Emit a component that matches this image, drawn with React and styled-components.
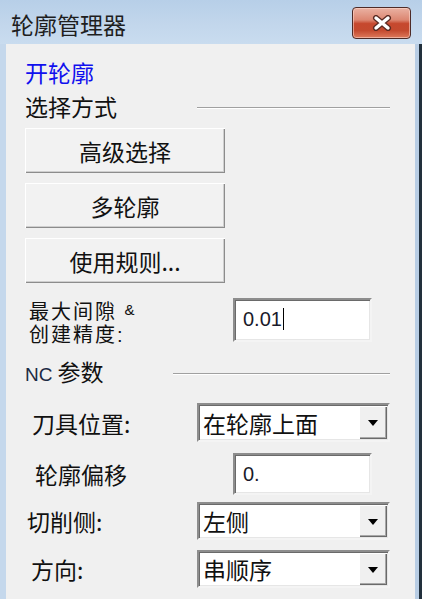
import React from 'react';
import styled, { createGlobalStyle } from 'styled-components';

const GlobalStyle = createGlobalStyle`
  html, body {
    margin: 0;
    padding: 0;
    background: #ffffff;
  }
  body {
    font-family: "Noto Sans CJK SC", "Noto Sans", sans-serif;
    color: #111;
  }
`;

const CJK = '"Noto Sans CJK SC", "Noto Sans", sans-serif';

export default function App() {
  return (
    <>
      <GlobalStyle />
      <Window>
        <TitleBar>
          <Title>轮廓管理器</Title>
          <CloseButton aria-label="close">
            <svg width="22" height="16" viewBox="0 0 22 16">
              <path d="M5 3 L17 13 M17 3 L5 13" stroke="#5a2a22" strokeWidth="6" strokeLinecap="round" />
              <path d="M5 3 L17 13 M17 3 L5 13" stroke="#ffffff" strokeWidth="3.4" strokeLinecap="round" />
            </svg>
          </CloseButton>
        </TitleBar>
        <Body>
          <SectionTitle>开轮廓</SectionTitle>
          <GroupHeader $top={10}>
            <GroupText>选择方式</GroupText>
            <Rule $width={193} $offset={13} />
          </GroupHeader>
          <ActionButton $top={10}>高级选择</ActionButton>
          <ActionButton $top={10}>多轮廓</ActionButton>
          <ActionButton $top={10}>使用规则...</ActionButton>

          <FieldRow $top={15} $height={44} $align="flex-start">
            <StackLabel $width={208} $indent={4}>
              <span>最大间隙 <Amp>&amp;</Amp></span>
              <span>创建精度:</span>
            </StackLabel>
            <TextBox $height={44}>
              <TextValue>0.01</TextValue>
              <Caret />
            </TextBox>
          </FieldRow>

          <GroupHeader $top={17}>
            <GroupText>
              <Latin>NC</Latin> 参数
            </GroupText>
            <Rule $width={217} $offset={14} />
          </GroupHeader>

          <FieldRow $top={20} $height={39}>
            <FieldLabel $width={172} $indent={7}>刀具位置:</FieldLabel>
            <ComboBox>
              <ComboValue>在轮廓上面</ComboValue>
              <DropButton>
                <Arrow />
              </DropButton>
            </ComboBox>
          </FieldRow>

          <FieldRow $top={11} $height={42}>
            <FieldLabel $width={208} $indent={10}>轮廓偏移</FieldLabel>
            <TextBox $height={42}>
              <TextValue>0.</TextValue>
            </TextBox>
          </FieldRow>

          <FieldRow $top={7} $height={38}>
            <FieldLabel $width={172} $indent={2}>切削侧:</FieldLabel>
            <ComboBox>
              <ComboValue>左侧</ComboValue>
              <DropButton>
                <Arrow />
              </DropButton>
            </ComboBox>
          </FieldRow>

          <FieldRow $top={10} $height={38}>
            <FieldLabel $width={172} $indent={6}>方向:</FieldLabel>
            <ComboBox>
              <ComboValue>串顺序</ComboValue>
              <DropButton>
                <Arrow />
              </DropButton>
            </ComboBox>
          </FieldRow>
        </Body>
      </Window>
    </>
  );
}

const Window = styled.div`
  width: 422px;
  height: 599px;
  overflow: hidden;
  display: flex;
  flex-direction: column;
  background: linear-gradient(90deg, #c5d8ec 0, #c5d8ec 415px, #b8cde4 415px, #b8cde4 419px, #22303c 419px);
`;

const TitleBar = styled.div`
  flex: 0 0 44px;
  display: flex;
  align-items: center;
  justify-content: space-between;
  padding: 0 11px 0 11px;
  background: linear-gradient(180deg, #b7cfe8 0%, #c3d7ec 60%, #c9dcef 100%);
  box-sizing: border-box;
`;

const Title = styled.div`
  font-family: ${CJK};
  font-size: 23px;
  line-height: 24px;
  color: #1e1e1e;
  margin-top: 3px;
`;

const CloseButton = styled.div`
  width: 59px;
  height: 32px;
  margin-top: 2px;
  box-sizing: border-box;
  border: 1px solid #4e2b27;
  border-radius: 4px;
  display: flex;
  align-items: center;
  justify-content: center;
  background: linear-gradient(180deg, #eab2a3 0%, #dc8671 40%, #c6482e 52%, #c44a2f 75%, #dd7a5c 100%);
  box-shadow: inset 0 0 0 1px rgba(255, 220, 210, 0.55);
`;

const Body = styled.div`
  flex: 1;
  margin: 0 7px 0 6px;
  padding: 16px 25px 0 19px;
  background: #f0f0f0;
  display: flex;
  flex-direction: column;
`;

const SectionTitle = styled.div`
  font-family: ${CJK};
  font-size: 23px;
  line-height: 24px;
  color: #1010ee;
`;

const GroupHeader = styled.div`
  margin-top: ${({ $top }) => $top}px;
  height: 24px;
  display: flex;
  align-items: flex-start;
`;

const GroupText = styled.div`
  font-family: ${CJK};
  font-size: 23px;
  line-height: 24px;
  color: #111;
  white-space: nowrap;
`;

const Latin = styled.span`
  font-family: "Liberation Sans", Arial, sans-serif;
  font-size: 19px;
  color: #1b2a44;
`;

const Rule = styled.div`
  flex: 0 0 ${({ $width }) => $width}px;
  margin-left: auto;
  margin-top: ${({ $offset }) => $offset}px;
  border-top: 1px solid #a0a0a0;
  border-bottom: 1px solid #ffffff;
`;

const ActionButton = styled.div`
  margin-top: ${({ $top }) => $top}px;
  width: 200px;
  height: 45px;
  box-sizing: border-box;
  display: flex;
  align-items: center;
  justify-content: center;
  font-family: ${CJK};
  font-size: 23px;
  color: #111;
  background: #f2f2f2;
  box-shadow:
    inset 1px 1px 0 #ffffff,
    inset -1px -1px 0 #8c8c8c,
    inset -2px -2px 0 #cfcfcf;
`;

const FieldRow = styled.div`
  margin-top: ${({ $top }) => $top}px;
  height: ${({ $height }) => $height}px;
  display: flex;
  align-items: ${({ $align }) => $align || 'center'};
`;

const FieldLabel = styled.div`
  flex: 0 0 ${({ $width }) => $width}px;
  box-sizing: border-box;
  padding-left: ${({ $indent }) => $indent}px;
  font-family: ${CJK};
  font-size: 23px;
  line-height: 24px;
  color: #111;
  white-space: nowrap;
`;

const StackLabel = styled.div`
  flex: 0 0 ${({ $width }) => $width}px;
  box-sizing: border-box;
  padding-left: ${({ $indent }) => $indent}px;
  display: flex;
  flex-direction: column;
  font-family: "Liberation Sans", "Noto Sans CJK SC", sans-serif;
  font-size: 20px;
  letter-spacing: 2px;
  line-height: 23px;
  color: #111;
  white-space: nowrap;
`;

const Amp = styled.span`
  font-family: "Liberation Sans", Arial, sans-serif;
  font-size: 15px;
  letter-spacing: 0;
  vertical-align: 4px;
`;

const sunken = `
  box-sizing: border-box;
  border-style: solid;
  border-width: 2px;
  border-color: #8d8d8d #f4f4f4 #f4f4f4 #8d8d8d;
  box-shadow: inset 1px 1px 0 #6a6a6a, inset -1px -1px 0 #e6e6e6;
  background: #ffffff;
`;

const TextBox = styled.div`
  ${sunken}
  width: 139px;
  height: ${({ $height }) => $height}px;
  padding: 7px 0 0 8px;
  display: flex;
  align-items: flex-start;
`;

const TextValue = styled.span`
  font-family: "Liberation Sans", Arial, sans-serif;
  font-size: 20px;
  line-height: 24px;
  color: #1a1a2a;
`;

const Caret = styled.span`
  width: 1px;
  height: 22px;
  margin: 1px 0 0 1px;
  background: #000;
`;

const ComboBox = styled.div`
  ${sunken}
  width: 196px;
  height: 100%;
  padding: 1px 1px 1px 4px;
  display: flex;
  align-items: center;
  justify-content: space-between;
`;

const ComboValue = styled.span`
  font-family: ${CJK};
  font-size: 23px;
  line-height: 24px;
  color: #111;
`;

const DropButton = styled.div`
  width: 28px;
  height: 100%;
  box-sizing: border-box;
  display: flex;
  align-items: center;
  justify-content: center;
  background: #f0f0f0;
  box-shadow:
    inset 1px 1px 0 #ffffff,
    inset -1px -1px 0 #6a6a6a,
    inset -2px -2px 0 #a8a8a8;
`;

const Arrow = styled.span`
  width: 0;
  height: 0;
  border-left: 5px solid transparent;
  border-right: 5px solid transparent;
  border-top: 6px solid #000;
  margin-top: 1px;
`;
